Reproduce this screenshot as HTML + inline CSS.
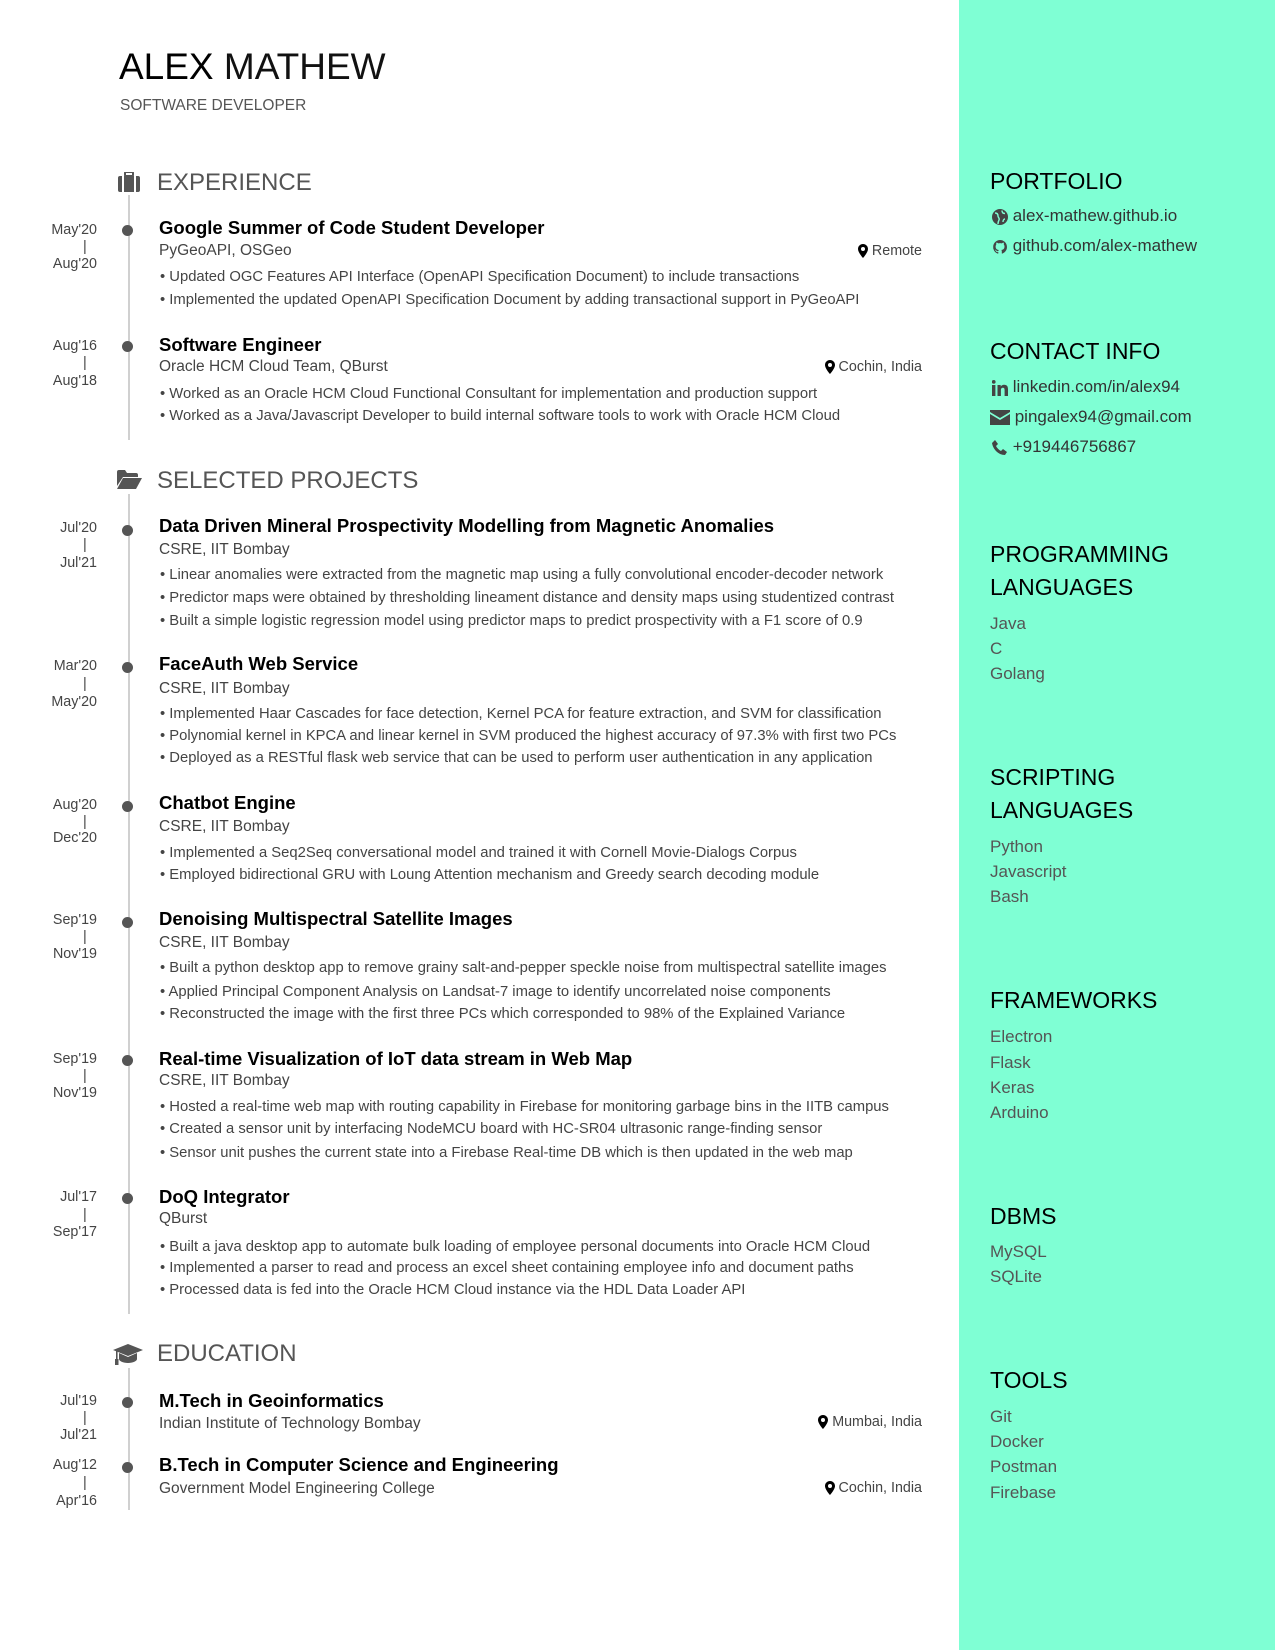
<!DOCTYPE html>
<html><head><meta charset="utf-8"><style>
*{margin:0;padding:0;box-sizing:border-box}
body{width:1275px;height:1650px;position:relative;background:#fff;font-family:"Liberation Sans",sans-serif;overflow:hidden;color:#444}
.t{position:absolute;white-space:nowrap;line-height:20px}
.side{position:absolute;left:959px;top:0;width:316px;height:1650px;background:#7fffd4}
.h{font-size:24px;color:#555;line-height:28px}
.ti{font-size:18.5px;font-weight:bold;color:#000;left:159px}
.su{font-size:15.5px;color:#444;left:159px}
.b{font-size:14.8px;color:#444;left:160px}
.d{font-size:14.3px;color:#444;left:0;width:97px;text-align:right}
.p{font-size:14.3px;color:#444;left:83px}
.loc{font-size:14.3px;color:#444;right:353px}
.line{position:absolute;left:128px;width:2px;background:#d0d0d0}
.dot{position:absolute;left:122px;width:11px;height:11px;border-radius:50%;background:#555}
.sh{font-size:23px;color:#000;left:990px;line-height:32px}
.si{font-size:17px;color:#333;left:992px;line-height:22px}
.sl{font-size:17px;color:#555;left:990px;line-height:22px}
svg{vertical-align:middle}
</style></head><body>
<div class="side"></div>
<div class="t" style="left:119px;top:45px;font-size:37px;line-height:44px;color:#000">ALEX <span style="color:#111">MATHEW</span></div>
<div class="t" style="left:120px;top:96px;font-size:15.5px;color:#555">SOFTWARE DEVELOPER</div>

<!-- Experience -->
<svg style="position:absolute;left:118px;top:172px" width="22" height="20" viewBox="0 0 22 20"><rect x="7" y="0" width="8" height="4" rx="1" fill="none" stroke="#555" stroke-width="2"/><rect x="0" y="4" width="22" height="16" rx="2" fill="#555"/><rect x="4" y="4" width="2" height="16" fill="#fff"/><rect x="16" y="4" width="2" height="16" fill="#fff"/></svg>
<div class="t h" style="left:157px;top:169px">EXPERIENCE</div>
<div class="line" style="top:195px;height:245px"></div>

<div class="dot" style="top:225px"></div>
<div class="t d" style="top:220px">May'20</div><div class="t p" style="top:237px">|</div><div class="t d" style="top:254px">Aug'20</div>
<div class="t ti" style="top:218px">Google Summer of Code Student Developer</div>
<div class="t su" style="top:241px">PyGeoAPI, OSGeo</div>
<div class="t loc" style="top:241px"><svg width="10" height="14" viewBox="0 0 10 14"><path d="M5 0C2.2 0 0 2.2 0 5c0 3.5 5 9 5 9s5-5.5 5-9C10 2.2 7.8 0 5 0zm0 7a2 2 0 1 1 0-4 2 2 0 0 1 0 4z" fill="#000"/></svg> Remote</div>
<div class="t b" style="top:267px">• Updated OGC Features API Interface (OpenAPI Specification Document) to include transactions</div>
<div class="t b" style="top:290px">• Implemented the updated OpenAPI Specification Document by adding transactional support in PyGeoAPI</div>

<div class="dot" style="top:341px"></div>
<div class="t d" style="top:336px">Aug'16</div><div class="t p" style="top:353px">|</div><div class="t d" style="top:371px">Aug'18</div>
<div class="t ti" style="top:335px">Software Engineer</div>
<div class="t su" style="top:357px">Oracle HCM Cloud Team, QBurst</div>
<div class="t loc" style="top:357px"><svg width="10" height="14" viewBox="0 0 10 14"><path d="M5 0C2.2 0 0 2.2 0 5c0 3.5 5 9 5 9s5-5.5 5-9C10 2.2 7.8 0 5 0zm0 7a2 2 0 1 1 0-4 2 2 0 0 1 0 4z" fill="#000"/></svg> Cochin, India</div>
<div class="t b" style="top:384px">• Worked as an Oracle HCM Cloud Functional Consultant for implementation and production support</div>
<div class="t b" style="top:406px">• Worked as a Java/Javascript Developer to build internal software tools to work with Oracle HCM Cloud</div>

<!-- Projects -->
<svg style="position:absolute;left:117px;top:470px" width="25" height="19" viewBox="0 0 25 19"><path d="M0 2a2 2 0 0 1 2-2h6l2 3h9a2 2 0 0 1 2 2v2H6L0 16z" fill="#555"/><path d="M6 8h19l-6 11H0z" fill="#555"/></svg>
<div class="t h" style="left:157px;top:467px">SELECTED PROJECTS</div>
<div class="line" style="top:494px;height:820px"></div>

<div class="dot" style="top:525px"></div>
<div class="t d" style="top:518px">Jul'20</div><div class="t p" style="top:535px">|</div><div class="t d" style="top:553px">Jul'21</div>
<div class="t ti" style="top:516px">Data Driven Mineral Prospectivity Modelling from Magnetic Anomalies</div>
<div class="t su" style="top:540px">CSRE, IIT Bombay</div>
<div class="t b" style="top:565px">• Linear anomalies were extracted from the magnetic map using a fully convolutional encoder-decoder network</div>
<div class="t b" style="top:588px">• Predictor maps were obtained by thresholding lineament distance and density maps using studentized contrast</div>
<div class="t b" style="top:611px">• Built a simple logistic regression model using predictor maps to predict prospectivity with a F1 score of 0.9</div>

<div class="dot" style="top:662px"></div>
<div class="t d" style="top:656px">Mar'20</div><div class="t p" style="top:674px">|</div><div class="t d" style="top:692px">May'20</div>
<div class="t ti" style="top:654px">FaceAuth Web Service</div>
<div class="t su" style="top:679px">CSRE, IIT Bombay</div>
<div class="t b" style="top:704px">• Implemented Haar Cascades for face detection, Kernel PCA for feature extraction, and SVM for classification</div>
<div class="t b" style="top:726px">• Polynomial kernel in KPCA and linear kernel in SVM produced the highest accuracy of 97.3% with first two PCs</div>
<div class="t b" style="top:748px">• Deployed as a RESTful flask web service that can be used to perform user authentication in any application</div>

<div class="dot" style="top:801px"></div>
<div class="t d" style="top:795px">Aug'20</div><div class="t p" style="top:812px">|</div><div class="t d" style="top:828px">Dec'20</div>
<div class="t ti" style="top:793px">Chatbot Engine</div>
<div class="t su" style="top:817px">CSRE, IIT Bombay</div>
<div class="t b" style="top:843px">• Implemented a Seq2Seq conversational model and trained it with Cornell Movie-Dialogs Corpus</div>
<div class="t b" style="top:865px">• Employed bidirectional GRU with Loung Attention mechanism and Greedy search decoding module</div>

<div class="dot" style="top:917px"></div>
<div class="t d" style="top:910px">Sep'19</div><div class="t p" style="top:927px">|</div><div class="t d" style="top:944px">Nov'19</div>
<div class="t ti" style="top:909px">Denoising Multispectral Satellite Images</div>
<div class="t su" style="top:933px">CSRE, IIT Bombay</div>
<div class="t b" style="top:958px">• Built a python desktop app to remove grainy salt-and-pepper speckle noise from multispectral satellite images</div>
<div class="t b" style="top:982px">• Applied Principal Component Analysis on Landsat-7 image to identify uncorrelated noise components</div>
<div class="t b" style="top:1004px">• Reconstructed the image with the first three PCs which corresponded to 98% of the Explained Variance</div>

<div class="dot" style="top:1055px"></div>
<div class="t d" style="top:1049px">Sep'19</div><div class="t p" style="top:1066px">|</div><div class="t d" style="top:1083px">Nov'19</div>
<div class="t ti" style="top:1049px">Real-time Visualization of IoT data stream in Web Map</div>
<div class="t su" style="top:1071px">CSRE, IIT Bombay</div>
<div class="t b" style="top:1097px">• Hosted a real-time web map with routing capability in Firebase for monitoring garbage bins in the IITB campus</div>
<div class="t b" style="top:1119px">• Created a sensor unit by interfacing NodeMCU board with HC-SR04 ultrasonic range-finding sensor</div>
<div class="t b" style="top:1143px">• Sensor unit pushes the current state into a Firebase Real-time DB which is then updated in the web map</div>

<div class="dot" style="top:1193px"></div>
<div class="t d" style="top:1187px">Jul'17</div><div class="t p" style="top:1205px">|</div><div class="t d" style="top:1222px">Sep'17</div>
<div class="t ti" style="top:1187px">DoQ Integrator</div>
<div class="t su" style="top:1209px">QBurst</div>
<div class="t b" style="top:1237px">• Built a java desktop app to automate bulk loading of employee personal documents into Oracle HCM Cloud</div>
<div class="t b" style="top:1258px">• Implemented a parser to read and process an excel sheet containing employee info and document paths</div>
<div class="t b" style="top:1280px">• Processed data is fed into the Oracle HCM Cloud instance via the HDL Data Loader API</div>

<!-- Education -->
<svg style="position:absolute;left:113px;top:1344px" width="30" height="22" viewBox="0 0 30 22"><path d="M15 0L0 6l15 6 15-6z" fill="#555"/><path d="M6 9v6c0 2 4 4 9 4s9-2 9-4V9l-9 4z" fill="#555"/><rect x="3" y="6" width="1.6" height="11" fill="#555"/><rect x="2" y="15" width="3.5" height="6" fill="#555"/></svg>
<div class="t h" style="left:157px;top:1340px">EDUCATION</div>
<div class="line" style="top:1368px;height:142px"></div>

<div class="dot" style="top:1397px"></div>
<div class="t d" style="top:1391px">Jul'19</div><div class="t p" style="top:1408px">|</div><div class="t d" style="top:1425px">Jul'21</div>
<div class="t ti" style="top:1391px">M.Tech in Geoinformatics</div>
<div class="t su" style="top:1414px">Indian Institute of Technology Bombay</div>
<div class="t loc" style="top:1412px"><svg width="10" height="14" viewBox="0 0 10 14"><path d="M5 0C2.2 0 0 2.2 0 5c0 3.5 5 9 5 9s5-5.5 5-9C10 2.2 7.8 0 5 0zm0 7a2 2 0 1 1 0-4 2 2 0 0 1 0 4z" fill="#000"/></svg> Mumbai, India</div>

<div class="dot" style="top:1462px"></div>
<div class="t d" style="top:1455px">Aug'12</div><div class="t p" style="top:1473px">|</div><div class="t d" style="top:1491px">Apr'16</div>
<div class="t ti" style="top:1455px">B.Tech in Computer Science and Engineering</div>
<div class="t su" style="top:1479px">Government Model Engineering College</div>
<div class="t loc" style="top:1478px"><svg width="10" height="14" viewBox="0 0 10 14"><path d="M5 0C2.2 0 0 2.2 0 5c0 3.5 5 9 5 9s5-5.5 5-9C10 2.2 7.8 0 5 0zm0 7a2 2 0 1 1 0-4 2 2 0 0 1 0 4z" fill="#000"/></svg> Cochin, India</div>

<!-- Sidebar -->
<div class="t sh" style="top:165px">PORTFOLIO</div>
<div class="t si" style="top:205px"><svg width="16" height="16" viewBox="0 0 16 16"><circle cx="8" cy="8" r="8" fill="#444"/><path d="M3 4c2 0 3 1 3 3s2 2 1 4-1 2-1 4M10 1.5c0 2 1 3 3 3M13 10c-1 0-2 1-2 3" stroke="#7fffd4" stroke-width="1.4" fill="none"/></svg> alex-mathew.github.io</div>
<div class="t si" style="top:235px"><svg width="16" height="16" viewBox="0 0 16 16"><path d="M8 1a7 7 0 0 0-2.2 13.6c.4.1.5-.1.5-.3v-1.3c-2 .4-2.4-.9-2.4-.9-.3-.8-.8-1-.8-1-.6-.4.1-.4.1-.4.7 0 1.1.7 1.1.7.6 1.1 1.7.8 2.1.6 0-.5.2-.8.4-1-1.6-.2-3.2-.8-3.2-3.5 0-.8.3-1.4.7-1.9 0-.2-.3-.9.1-1.9 0 0 .6-.2 1.9.7a6.6 6.6 0 0 1 3.5 0c1.3-.9 1.9-.7 1.9-.7.4 1 .1 1.7.1 1.9.5.5.7 1.1.7 1.9 0 2.7-1.6 3.3-3.2 3.5.3.2.5.7.5 1.3v2c0 .2.1.4.5.3A7 7 0 0 0 8 1z" fill="#444"/></svg> github.com/alex-mathew</div>

<div class="t sh" style="top:335px">CONTACT INFO</div>
<div class="t si" style="top:376px"><svg width="16" height="16" viewBox="0 0 16 16"><rect x="0" y="5" width="3.4" height="11" fill="#444"/><circle cx="1.7" cy="1.9" r="1.9" fill="#444"/><path d="M5.5 5h3.2v1.6c.5-1 1.7-1.9 3.4-1.9 3 0 3.9 1.8 3.9 4.6V16h-3.4v-5.8c0-1.4-.3-2.5-1.7-2.5-1.5 0-2 1.1-2 2.5V16H5.5z" fill="#444"/></svg> linkedin.com/in/alex94</div>
<div class="t si" style="top:406px;left:990px"><svg width="20" height="15" viewBox="0 0 20 15"><path d="M0 0h20v2l-10 6L0 2z" fill="#444"/><path d="M0 4l10 6 10-6v11H0z" fill="#444"/></svg> pingalex94@gmail.com</div>
<div class="t si" style="top:436px"><svg width="16" height="16" viewBox="0 0 16 16"><path d="M3 0l3 4-2 2c1 2 3 4 5 5l2-2 4 3-2 3C6 15 1 9 0 3z" fill="#444"/></svg> +919446756867</div>

<div class="t sh" style="top:538px">PROGRAMMING</div>
<div class="t sh" style="top:571px">LANGUAGES</div>
<div class="t sl" style="top:613px">Java</div>
<div class="t sl" style="top:638px">C</div>
<div class="t sl" style="top:663px">Golang</div>

<div class="t sh" style="top:761px">SCRIPTING</div>
<div class="t sh" style="top:794px">LANGUAGES</div>
<div class="t sl" style="top:836px">Python</div>
<div class="t sl" style="top:861px">Javascript</div>
<div class="t sl" style="top:886px">Bash</div>

<div class="t sh" style="top:984px">FRAMEWORKS</div>
<div class="t sl" style="top:1026px">Electron</div>
<div class="t sl" style="top:1052px">Flask</div>
<div class="t sl" style="top:1077px">Keras</div>
<div class="t sl" style="top:1102px">Arduino</div>

<div class="t sh" style="top:1200px">DBMS</div>
<div class="t sl" style="top:1241px">MySQL</div>
<div class="t sl" style="top:1266px">SQLite</div>

<div class="t sh" style="top:1364px">TOOLS</div>
<div class="t sl" style="top:1406px">Git</div>
<div class="t sl" style="top:1431px">Docker</div>
<div class="t sl" style="top:1456px">Postman</div>
<div class="t sl" style="top:1482px">Firebase</div>
</body></html>
